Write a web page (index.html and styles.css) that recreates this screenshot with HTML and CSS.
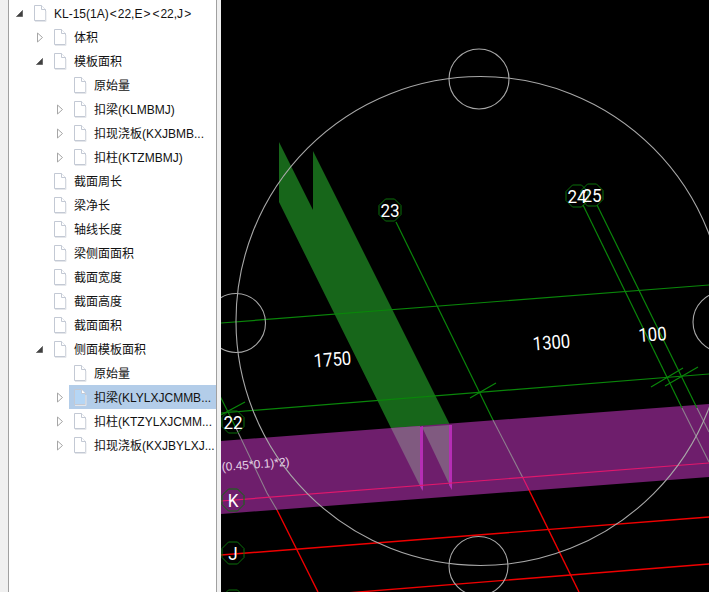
FILE: index.html
```html
<!DOCTYPE html>
<html lang="zh">
<head>
<meta charset="utf-8">
<title>KL-15</title>
<link rel="stylesheet" href="styles.css">
</head>
<body>
<svg width="0" height="0" class="defs">
  <defs>
    <symbol id="doc" viewBox="0 0 14 17">
      <path d="M1.5 .5H8.5L12.5 4.5V15.5H1.5Z" fill="currentColor" stroke="#c3c9d4"/>
      <path d="M8.5 .5V4.5H12.5" fill="#fff" stroke="#c3c9d4"/>
      <path d="M2 16.5H13V6" fill="none" stroke="#e4e6ea"/>
    </symbol>
    <symbol id="open" viewBox="0 0 9 9"><path d="M7.5 1.5V7.5H1.5Z" fill="#404040" stroke="#6a6a6a"/></symbol>
    <symbol id="closed" viewBox="0 0 9 11"><path d="M2.5 1L7.5 5.5L2.5 10Z" fill="#fff" stroke="#a6a6a6"/></symbol>
  </defs>
</svg>
<div class="app">
  <aside class="panel">
    <ul class="tree">
      <li class="row"><svg class="tw l0"><use href="#open"/></svg><span class="item"><svg class="doc"><use href="#doc"/></svg><span class="label">KL-15(1A)<span class="ang">&lt;</span>22,E<span class="ang">&gt;</span><span class="ang">&lt;</span>22,J<span class="ang">&gt;</span></span></span></li>
      <li class="row"><svg class="tw l1 cl"><use href="#closed"/></svg><span class="item"><svg class="doc"><use href="#doc"/></svg><span class="label">体积</span></span></li>
      <li class="row"><svg class="tw l1"><use href="#open"/></svg><span class="item"><svg class="doc"><use href="#doc"/></svg><span class="label">模板面积</span></span></li>
      <li class="row"><span class="tw l2"></span><span class="item"><svg class="doc"><use href="#doc"/></svg><span class="label">原始量</span></span></li>
      <li class="row"><svg class="tw l2 cl"><use href="#closed"/></svg><span class="item"><svg class="doc"><use href="#doc"/></svg><span class="label">扣梁(KLMBMJ)</span></span></li>
      <li class="row"><svg class="tw l2 cl"><use href="#closed"/></svg><span class="item"><svg class="doc"><use href="#doc"/></svg><span class="label">扣现浇板(KXJBMB...</span></span></li>
      <li class="row"><svg class="tw l2 cl"><use href="#closed"/></svg><span class="item"><svg class="doc"><use href="#doc"/></svg><span class="label">扣柱(KTZMBMJ)</span></span></li>
      <li class="row"><span class="tw l1"></span><span class="item"><svg class="doc"><use href="#doc"/></svg><span class="label">截面周长</span></span></li>
      <li class="row"><span class="tw l1"></span><span class="item"><svg class="doc"><use href="#doc"/></svg><span class="label">梁净长</span></span></li>
      <li class="row"><span class="tw l1"></span><span class="item"><svg class="doc"><use href="#doc"/></svg><span class="label">轴线长度</span></span></li>
      <li class="row"><span class="tw l1"></span><span class="item"><svg class="doc"><use href="#doc"/></svg><span class="label">梁侧面面积</span></span></li>
      <li class="row"><span class="tw l1"></span><span class="item"><svg class="doc"><use href="#doc"/></svg><span class="label">截面宽度</span></span></li>
      <li class="row"><span class="tw l1"></span><span class="item"><svg class="doc"><use href="#doc"/></svg><span class="label">截面高度</span></span></li>
      <li class="row"><span class="tw l1"></span><span class="item"><svg class="doc"><use href="#doc"/></svg><span class="label">截面面积</span></span></li>
      <li class="row"><svg class="tw l1"><use href="#open"/></svg><span class="item"><svg class="doc"><use href="#doc"/></svg><span class="label">侧面模板面积</span></span></li>
      <li class="row"><span class="tw l2"></span><span class="item"><svg class="doc"><use href="#doc"/></svg><span class="label">原始量</span></span></li>
      <li class="row"><svg class="tw l2 cl"><use href="#closed"/></svg><span class="item selected"><svg class="doc"><use href="#doc"/></svg><span class="label">扣梁(KLYLXJCMMB...</span></span></li>
      <li class="row"><svg class="tw l2 cl"><use href="#closed"/></svg><span class="item"><svg class="doc"><use href="#doc"/></svg><span class="label">扣柱(KTZYLXJCMM...</span></span></li>
      <li class="row"><svg class="tw l2 cl"><use href="#closed"/></svg><span class="item"><svg class="doc"><use href="#doc"/></svg><span class="label">扣现浇板(KXJBYLXJ...</span></span></li>
    </ul>
  </aside>
  <main class="canvas">
    <svg class="drawing" viewBox="221 0 488 592" width="488" height="592">
      <path class="beam" d="M279 142L313 210V151L451 427L391 428L279 202Z"/>
      <path class="band" d="M221 441L709 404V477L221 514Z"/>
      <path class="pale" d="M391 428L420 426L422 490Z"/>
      <path class="pale" d="M422 427L449 425L451 488Z"/>
      <path class="sliver" d="M420 427L423 426V491L420 486Z"/>
      <path class="sliver" d="M449 425L452 425V490L449 485Z"/>
      <g class="green">
        <path d="M221 323L709 285"/>
        <path d="M221 413L709 374"/>
        <path d="M218 392L236 428"/>
        <path d="M396 222L493 420"/>
        <path d="M583 205L682 408"/>
        <path d="M597 205L697 408"/>
        <path d="M221 415L245 402M470 398L496 383M651 387L683 368M665 386L698 367"/>
      </g>
      <g class="grey">
        <path d="M236 428L267 493L277 510"/>
        <path d="M493 420L523 478"/>
        <path d="M682 408L709 462"/>
        <path d="M697 408L709 432"/>
      </g>
      <g class="pink">
        <path d="M221 501L709 463"/>
        <path d="M523 478L529 490"/>
      </g>
      <g class="red">
        <path d="M221 555L709 517"/>
        <path d="M221 603L709 564"/>
        <path d="M277 510L318 592"/>
        <path d="M529 490L579 592"/>
      </g>
      <g class="ring">
        <circle cx="480.5" cy="321" r="244.5"/>
        <circle cx="479" cy="79" r="30"/>
        <circle cx="236" cy="323" r="29.5"/>
        <circle cx="723" cy="322" r="30"/>
        <circle cx="478.5" cy="566" r="29.5"/>
      </g>
      <g class="bubble">
        <path transform="translate(390 210)" d="M-4.5 -11H4.5L11 -4.5V4.5L4.5 11H-4.5L-11 4.5V-4.5Z"/>
        <path transform="translate(577 196)" d="M-4.5 -11H4.5L11 -4.5V4.5L4.5 11H-4.5L-11 4.5V-4.5Z"/>
        <path transform="translate(592 195)" d="M-4.5 -11H4.5L11 -4.5V4.5L4.5 11H-4.5L-11 4.5V-4.5Z"/>
        <path transform="translate(233 422)" d="M-4.5 -11H4.5L11 -4.5V4.5L4.5 11H-4.5L-11 4.5V-4.5Z"/>
        <path transform="translate(233 500)" d="M-4.5 -11H4.5L11 -4.5V4.5L4.5 11H-4.5L-11 4.5V-4.5Z"/>
        <path transform="translate(233 553)" d="M-4.5 -11H4.5L11 -4.5V4.5L4.5 11H-4.5L-11 4.5V-4.5Z"/>
        <path transform="translate(233 601)" d="M-4.5 -11H4.5L11 -4.5V4.5L4.5 11H-4.5L-11 4.5V-4.5Z"/>
      </g>
      <g class="tag">
        <text transform="translate(390 217) scale(.9 1)">23</text>
        <text transform="translate(577 203) scale(.9 1)">24</text>
        <text transform="translate(592 202) scale(.9 1)">25</text>
        <text transform="translate(233 429) scale(.9 1)">22</text>
        <text transform="translate(233 507) scale(.9 1)">K</text>
        <text transform="translate(233 560) scale(.9 1)">J</text>
      </g>
      <g class="tag">
        <text transform="translate(333 366) rotate(-4.5) scale(.88 1)">1750</text>
        <text transform="translate(552 349) rotate(-4.5) scale(.88 1)">1300</text>
        <text transform="translate(653 341) rotate(-4.5) scale(.88 1)">100</text>
      </g>
      <text class="formula" transform="translate(222 471) rotate(-4.5)">(0.45*0.1)*2)</text>
    </svg>
  </main>
</div>
</body>
</html>
```
FILE: styles.css
```css
html, body {
  margin: 0;
  height: 100%;
  overflow: hidden;
  background: #f0f0f0;
}
.defs { position: absolute; }
.app {
  display: flex;
  width: 709px;
  height: 592px;
  padding-left: 8px;
  box-sizing: border-box;
}
.panel {
  width: 209px;
  margin-right: 4px;
  flex: none;
  box-sizing: border-box;
  background: #fff;
  border-left: 1px solid #a0a0a0;
  border-right: 1px solid #a0a0a0;
}
.tree {
  list-style: none;
  margin: 0;
  padding: 1px 0 0;
  font: 12px/24px "Liberation Sans", "Noto Sans CJK SC", sans-serif;
  color: #111;
}
.row {
  display: flex;
  align-items: center;
  height: 24px;
}
.tw {
  flex: none;
  width: 9px;
  height: 9px;
  margin-right: 5px;
}
.tw.cl { height: 11px; }
.l0 { margin-left: 6px; }
.l1 { margin-left: 26px; }
.l2 { margin-left: 46px; }
.item {
  flex: 1;
  min-width: 0;
  display: flex;
  align-items: center;
  height: 24px;
  padding-left: 4px;
}
.doc {
  flex: none;
  width: 14px;
  height: 17px;
  margin-right: 7px;
  color: #fff;
}
.label {
  min-width: 0;
  padding-top: 1px;
  white-space: nowrap;
}
.ang { padding: 0 1px; }
.selected { background: #b3cde9; }
.selected .doc { color: #b5d6f5; }
.canvas {
  flex: 1;
  background: #000;
  overflow: hidden;
}
.drawing { display: block; }
.drawing path, .drawing circle { fill: none; }
.drawing .beam { fill: #17661a; }
.drawing .band { fill: #6e1e6c; }
.drawing .pale { fill: #805a80; }
.drawing .sliver { fill: #b52eb5; }
.green path { stroke: #0a860a; stroke-width: 1.2; }
.grey path { stroke: #8e7f8e; stroke-width: 1.1; }
.pink path { stroke: #e0186c; stroke-width: 1.2; }
.red path { stroke: #f00000; stroke-width: 1.4; }
.ring circle { stroke: #a8a8a8; stroke-width: 1.1; }
.bubble path { stroke: #0a700a; stroke-width: 1; }
.tag text {
  font: 400 19px Roboto, "Liberation Sans", sans-serif;
  fill: #fff;
  text-anchor: middle;
}
.formula {
  font: 12px "Liberation Sans", sans-serif;
  fill: #e6d4e6;
}
```
